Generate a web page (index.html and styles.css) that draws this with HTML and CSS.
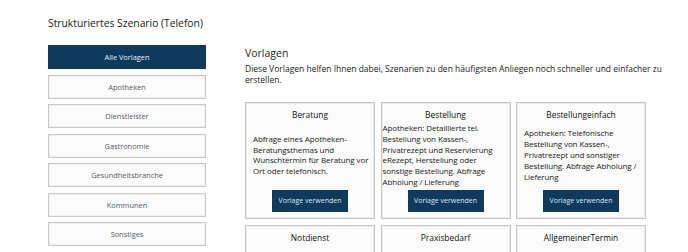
FILE: index.html
```html
<!DOCTYPE html>
<html lang="de">
<head>
<meta charset="utf-8">
<title>Strukturiertes Szenario (Telefon)</title>
<link rel="stylesheet" href="styles.css">
</head>
<body>
<div class="page">
  <h1 class="page-title">Strukturiertes Szenario (Telefon)</h1>
  <div class="layout">
    <nav class="sidebar">
      <button class="nav-btn nav-btn--active">Alle Vorlagen</button>
      <button class="nav-btn">Apotheken</button>
      <button class="nav-btn">Dienstleister</button>
      <button class="nav-btn">Gastronomie</button>
      <button class="nav-btn">Gesundheitsbranche</button>
      <button class="nav-btn">Kommunen</button>
      <button class="nav-btn">Sonstiges</button>
    </nav>
    <main class="content">
      <h2 class="content-title">Vorlagen</h2>
      <p class="content-intro">Diese Vorlagen helfen Ihnen dabei, Szenarien zu den häufigsten Anliegen noch schneller und einfacher zu erstellen.</p>
      <div class="cards">
        <div class="card">
          <div class="card-title">Beratung</div>
          <div class="card-desc">Abfrage eines Apotheken-Beratungsthemas und Wunschtermin für Beratung vor Ort oder telefonisch.</div>
          <button class="card-btn">Vorlage verwenden</button>
        </div>
        <div class="card">
          <div class="card-title">Bestellung</div>
          <div class="card-desc card-desc--wide">Apotheken: Detaillierte tel. Bestellung von Kassen-, Privatrezept und Reservierung eRezept, Herstellung oder sonstige Bestellung. Abfrage Abholung / Lieferung</div>
          <button class="card-btn">Vorlage verwenden</button>
        </div>
        <div class="card">
          <div class="card-title">Bestellungeinfach</div>
          <div class="card-desc">Apotheken: Telefonische Bestellung von Kassen-, Privatrezept und sonstiger Bestellung. Abfrage Abholung / Lieferung</div>
          <button class="card-btn">Vorlage verwenden</button>
        </div>
        <div class="card">
          <div class="card-title">Notdienst</div>
        </div>
        <div class="card">
          <div class="card-title">Praxisbedarf</div>
        </div>
        <div class="card">
          <div class="card-title">AllgemeinerTermin</div>
        </div>
      </div>
    </main>
  </div>
</div>
</body>
</html>
```

FILE: styles.css
```css
html, body {
  margin: 0;
  padding: 0;
  background: #ffffff;
  overflow: hidden;
}
body {
  font-family: "Open Sans", "DejaVu Sans", sans-serif;
  color: #1f1f1f;
}
.page {
  padding: 15px 0 0 48px;
}
.page-title {
  margin: 0;
  font-size: 10.3px;
  font-weight: 500;
  line-height: 16px;
  color: #222;
}
.layout {
  display: flex;
  align-items: flex-start;
  margin-top: 14px;
  gap: 39px;
}
.sidebar {
  width: 158px;
  display: flex;
  flex-direction: column;
  gap: 5.5px;
  flex-shrink: 0;
}
.nav-btn {
  height: 24px;
  border: 1px solid #c9c9c9;
  background: #fbfbfb;
  color: #555c66;
  font-family: inherit;
  font-size: 7.4px;
  padding: 0;
  box-shadow: inset 0 0 0 1px #f0f0f0;
}
.nav-btn--active {
  background: #0d3a5d;
  border-color: #0d3a5d;
  color: #e8eef4;
  box-shadow: none;
}
.content {
  width: 440px;
}
.content-title {
  margin: 0;
  padding-top: 1px;
  font-size: 10.5px;
  font-weight: 500;
  line-height: 14px;
}
.content-intro {
  margin: 3px 0 0;
  font-size: 8.5px;
  line-height: 11px;
  color: #222;
}
.cards {
  display: grid;
  grid-template-columns: repeat(3, 130px);
  column-gap: 5.5px;
  row-gap: 6px;
  margin-top: 17px;
}
.card {
  border: 1px solid #c6c6c6;
  background: #fbfbfb;
  box-shadow: inset 0 0 0 1px #ececec;
  padding: 5px 7px 6px;
  display: flex;
  flex-direction: column;
  justify-content: space-between;
  align-items: center;
  min-height: 60px;
  box-sizing: border-box;
}
.card-title {
  font-size: 8.4px;
  font-weight: 400;
  line-height: 13px;
  text-align: center;
  color: #111;
}
.card-desc {
  align-self: stretch;
  font-size: 8px;
  letter-spacing: -0.1px;
  line-height: 10.8px;
  color: #222;
  margin: 2px -5px 2px 0;
}
.card-desc--wide {
  margin-left: -6px;
  margin-right: 0;
}
.card-btn {
  width: 76px;
  height: 22px;
  border: none;
  background: #0d3a5d;
  color: #dde6ee;
  font-family: inherit;
  font-size: 7px;
  padding: 0;
}
```
